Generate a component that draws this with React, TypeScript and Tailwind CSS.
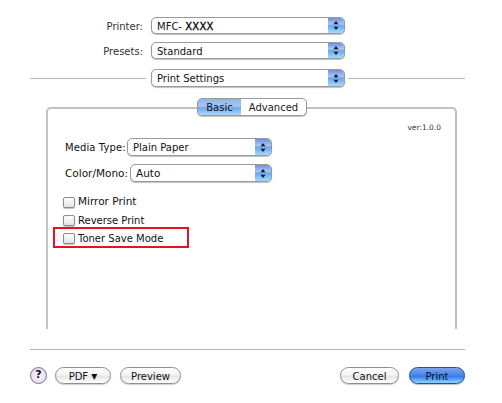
import React from 'react';

function Stepper() {
  return (
    <span className="relative flex w-[16px] shrink-0 items-center justify-center self-stretch rounded-r-[4px] bg-[linear-gradient(#6f8fdc_0%,#a9c6f2_40%,#6aa6f2_52%,#9fdcff_100%)]">
      <svg width="8" height="11" viewBox="0 0 8 11">
        <path d="M4 1 L6.5 4.2 H1.5 Z M4 10 L6.5 6.8 H1.5 Z" fill="#10182a" />
      </svg>
    </span>
  );
}

function Select({ value, className }: { value: React.ReactNode; className: string }) {
  return (
    <div className={`flex items-stretch overflow-hidden rounded-[5px] border border-[#9a9a9a] bg-white shadow-[0_1px_1px_rgba(0,0,0,0.25)] ${className}`}>
      <span className="flex-1 pt-px pl-[5px] leading-[15px] text-[#111]">{value}</span>
      <Stepper />
    </div>
  );
}

function Checkbox({ label, className = '' }: { label: string; className?: string }) {
  return (
    <div className="flex h-[18px] items-center">
      <span className="ml-[15px] h-[11px] w-[12px] rounded-[2px] border border-[#8c8c8c] bg-[linear-gradient(#ffffff,#e4e4e4)] shadow-[0_1px_1px_rgba(0,0,0,0.25)]" />
      <span className={`ml-[3px] text-[#111] ${className}`}>{label}</span>
    </div>
  );
}

function PillButton({ label, className }: { label: React.ReactNode; className: string }) {
  return (
    <button className={`flex h-[17px] items-center justify-center rounded-full border border-[#8f8f8f] bg-[linear-gradient(#ffffff_0%,#f4f4f4_45%,#e6e6e6_55%,#ffffff_100%)] pt-px text-[#111] shadow-[0_1px_1px_rgba(0,0,0,0.2)] ${className}`}>
      {label}
    </button>
  );
}

export default function App() {
  return (
    <div className="flex h-[403px] w-[502px] flex-col overflow-hidden bg-white pt-[17px] font-['DejaVu_Sans',sans-serif] text-[10px]">
      <div className="flex items-center">
        <span className="w-[143px] pt-px text-right text-[#333]">Printer:</span>
        <Select value={<>MFC- <span className="tracking-[0.3px] text-black [-webkit-text-stroke:0.3px_#000]">XXXX</span></>} className="ml-[8px] h-[17px] w-[194px]" />
      </div>
      <div className="mt-[8px] flex items-center">
        <span className="w-[143px] pt-px text-right text-[#333]">Presets:</span>
        <Select value="Standard" className="ml-[8px] h-[17px] w-[194px]" />
      </div>

      <div className="mt-[10px] flex items-center pl-[30px]">
        <div className="h-px w-[116px] bg-[#b4b4b4]" />
        <Select value="Print Settings" className="ml-[5px] h-[18px] w-[194px]" />
        <div className="ml-[3px] h-px w-[117px] bg-[#b4b4b4]" />
      </div>

      {/* Tabs sit on top of the panel's border */}
      <div className="relative z-10 mt-[11px] ml-[197px] flex h-[18px] w-[110px] overflow-hidden rounded-[5px] border border-[#9a9a9a] bg-white shadow-[0_1px_1px_rgba(0,0,0,0.25)]">
        <span className="flex w-[43px] items-center justify-center bg-[linear-gradient(#8fb4ee_0%,#a9c6f2_45%,#6aa6f2_55%,#a8dcff_100%)] pt-px text-[#111]">Basic</span>
        <span className="flex flex-1 items-center justify-center pt-px text-[#222]">Advanced</span>
      </div>

      <div className="ml-[46px] -mt-[9px] flex h-[222px] w-[411px] flex-col rounded-t-[5px] border-x-2 border-t-2 border-[#c2c2c2]">
        <div className="mt-[14px] pr-[14px] text-right text-[7.5px] leading-[10px] text-[#333]">ver:1.0.0</div>
        <div className="mt-[5px] flex items-center pl-[17px]">
          <span className="w-[62px] whitespace-nowrap pt-px text-[10px] tracking-[0.1px] text-[#111]">Media Type:</span>
          <Select value="Plain Paper" className="h-[18px] w-[145px]" />
        </div>
        <div className="mt-[8px] flex items-center pl-[17px]">
          <span className="w-[65px] whitespace-nowrap pt-px text-[10.5px] text-[#111]">Color/Mono:</span>
          <Select value={<span className="text-[10.5px]">Auto</span>} className="h-[18px] w-[142px]" />
        </div>
        <div className="mt-[11px] flex flex-col">
          <Checkbox label="Mirror Print" className="text-[10.5px]" />
          <Checkbox label="Reverse Print" />
          {/* red highlight box lies over the row */}
          <div className="relative">
            <Checkbox label="Toner Save Mode" />
            <div className="absolute -top-[2px] left-[5px] h-[21px] w-[136px] border-2 border-[#e5141c]" />
          </div>
        </div>
      </div>

      <div className="mt-[20px] ml-[30px] h-px w-[435px] bg-[#b4b4b4]" />

      <div className="mt-[17px] flex items-center pl-[30px]">
        <span className="flex h-[17px] w-[17px] items-center justify-center rounded-full border border-[#777] bg-[radial-gradient(circle,#ffffff_0%,#d9c8ff_100%)] text-[11px] font-bold text-[#111]">?</span>
        <PillButton label={<span>PDF <span className="text-[12px] leading-[10px]">▾</span></span>} className="ml-[8px] w-[56px]" />
        <PillButton label="Preview" className="ml-[9px] w-[61px]" />
        <PillButton label="Cancel" className="ml-[159px] w-[59px]" />
        <button className="ml-[10px] flex h-[17px] w-[56px] items-center justify-center rounded-full border border-[#25508f] bg-[linear-gradient(#7aa4ea_0%,#4d86ea_45%,#2f7bf0_55%,#8fd6ff_100%)] pt-px text-[#08111f] shadow-[0_1px_1px_rgba(0,0,0,0.25)]">
          Print
        </button>
      </div>
    </div>
  );
}
